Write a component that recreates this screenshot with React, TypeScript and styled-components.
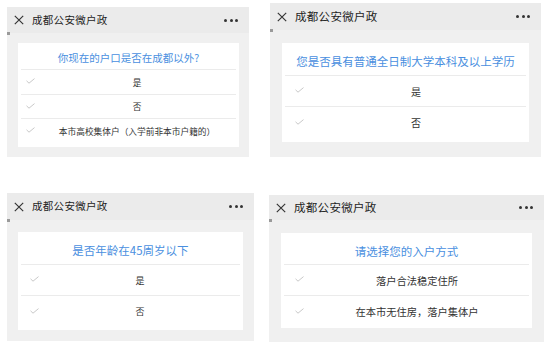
import styled, { createGlobalStyle } from 'styled-components'

const GlobalStyle = createGlobalStyle`
  html, body {
    margin: 0;
    padding: 0;
    background: #ffffff;
  }
  body {
    font-family: "Noto Sans CJK SC", "Noto Sans", sans-serif;
  }
`

const Page = styled.div`
  display: grid;
  grid-template-columns: 262px 282px;
  grid-template-rows: 154px 152px;
  row-gap: 36px;
  padding: 3px 0 0 7px;
  width: 551px;
  height: 345px;
  box-sizing: border-box;
  overflow: hidden;
`

const PanelFrame = styled.div<{ $w: number; $h: number; $mt: number; $ml: number }>`
  position: relative;
  display: flex;
  flex-direction: column;
  width: ${p => p.$w}px;
  height: ${p => p.$h}px;
  margin-top: ${p => p.$mt}px;
  margin-left: ${p => p.$ml}px;
  background-color: #f0f0f0;
`

const Header = styled.div<{ $h: number; $fs: number }>`
  display: flex;
  align-items: center;
  height: ${p => p.$h}px;
  padding: 0 11px 0 7px;
  background-color: #ebebeb;
  color: #1e1e1e;
  font-size: ${p => p.$fs}px;
  flex-shrink: 0;
`

const HeaderTitle = styled.div`
  flex: 1;
  margin-left: 8px;
  line-height: 1;
  letter-spacing: 0.3px;
`

const Dots = styled.div`
  display: flex;
  gap: 2.5px;
`

const Dot = styled.span`
  width: 3px;
  height: 3px;
  border-radius: 50%;
  background-color: #333;
`

const Marker = styled.span`
  position: absolute;
  left: 0;
  width: 3px;
  height: 3px;
  background-color: #9a9a9a;
`

const Card = styled.div<{ $mt: number; $ml: number; $mr: number; $pb: number }>`
  margin: ${p => p.$mt}px ${p => p.$mr}px 0 ${p => p.$ml}px;
  padding: 0 3px ${p => p.$pb}px;
  background-color: #ffffff;
`

const Question = styled.div<{ $h: number; $fs: number; $pt: number }>`
  display: flex;
  align-items: center;
  justify-content: center;
  height: ${p => p.$h}px;
  padding-top: ${p => p.$pt}px;
  box-sizing: border-box;
  color: #4a8fe0;
  font-size: ${p => p.$fs}px;
  border-bottom: 1px solid #ebebeb;
`

const Option = styled.div<{ $h: number; $fs: number; $last: boolean }>`
  display: flex;
  align-items: center;
  height: ${p => p.$h}px;
  box-sizing: border-box;
  border-bottom: ${p => (p.$last ? 'none' : '1px solid #ebebeb')};
  color: #333;
  font-size: ${p => p.$fs}px;
`

const CheckCol = styled.div<{ $w: number; $pl: number }>`
  width: ${p => p.$w}px;
  padding-left: ${p => p.$pl}px;
  box-sizing: border-box;
  display: flex;
  align-items: center;
  margin-top: -2px;
`

const OptionText = styled.div`
  flex: 1;
  text-align: center;
  white-space: nowrap;
`

function CloseIcon({ size }: { size: number }) {
  return (
    <svg width={size} height={size} viewBox="0 0 10 10">
      <path d="M0.8 0.8L9.2 9.2M9.2 0.8L0.8 9.2" stroke="#333" strokeWidth="1.15" />
    </svg>
  )
}

function CheckIcon() {
  return (
    <svg width="9" height="6" viewBox="0 0 9 6">
      <polyline points="0.5,2.8 3,5.2 8.5,0.6" fill="none" stroke="#c2c2c2" strokeWidth="0.9" />
    </svg>
  )
}

interface IPanel {
  w: number
  h: number
  mt: number
  ml: number
  headerH: number
  headerFs: number
  closeSize: number
  card: { mt: number; ml: number; mr: number; pb: number }
  titleH: number
  titlePt: number
  titleFs: number
  question: string
  rows: number[]
  optionFs: number
  checkW: number
  checkPl: number
  options: string[]
}

const panels: IPanel[] = [
  {
    w: 242, h: 150, mt: 4, ml: 0,
    headerH: 26, headerFs: 10.5, closeSize: 10,
    card: { mt: 10, ml: 11, mr: 10, pb: 4 },
    titleH: 27, titlePt: 2, titleFs: 10.5,
    question: '你现在的户口是否在成都以外?',
    rows: [25, 24, 24],
    optionFs: 8.7, checkW: 17, checkPl: 5,
    options: ['是', '否', '本市高校集体户（入学前非本市户籍的）'],
  },
  {
    w: 271, h: 154, mt: 0, ml: 1,
    headerH: 27, headerFs: 11.5, closeSize: 10,
    card: { mt: 13, ml: 12, mr: 12, pb: 4 },
    titleH: 33, titlePt: 4, titleFs: 11.5,
    question: '您是否具有普通全日制大学本科及以上学历',
    rows: [31, 31],
    optionFs: 10, checkW: 21, checkPl: 10,
    options: ['是', '否'],
  },
  {
    w: 247, h: 148, mt: 0, ml: 0,
    headerH: 27, headerFs: 10.5, closeSize: 10,
    card: { mt: 12, ml: 11, mr: 11, pb: 3 },
    titleH: 33, titlePt: 4, titleFs: 11.5,
    question: '是否年龄在45周岁以下',
    rows: [31, 31],
    optionFs: 9, checkW: 19, checkPl: 9,
    options: ['是', '否'],
  },
  {
    w: 275, h: 147, mt: 2, ml: 0,
    headerH: 25, headerFs: 11.5, closeSize: 10,
    card: { mt: 13, ml: 12, mr: 12, pb: 1 },
    titleH: 32, titlePt: 4, titleFs: 11.5,
    question: '请选择您的入户方式',
    rows: [31, 31],
    optionFs: 10.25, checkW: 21, checkPl: 11,
    options: ['落户合法稳定住所', '在本市无住房，落户集体户'],
  },
]

function Panel(p: IPanel) {
  return (
    <PanelFrame $w={p.w} $h={p.h} $mt={p.mt} $ml={p.ml}>
      <Header $h={p.headerH} $fs={p.headerFs}>
        <CloseIcon size={p.closeSize} />
        <HeaderTitle>成都公安微户政</HeaderTitle>
        <Dots>
          <Dot />
          <Dot />
          <Dot />
        </Dots>
      </Header>
      <Marker style={{ top: p.headerH - 1 }} />
      <Card $mt={p.card.mt} $ml={p.card.ml} $mr={p.card.mr} $pb={p.card.pb}>
        <Question $h={p.titleH} $fs={p.titleFs} $pt={p.titlePt}>
          {p.question}
        </Question>
        {p.options.map((option, i) => (
          <Option key={option} $h={p.rows[i]} $fs={p.optionFs} $last={i === p.options.length - 1}>
            <CheckCol $w={p.checkW} $pl={p.checkPl}>
              <CheckIcon />
            </CheckCol>
            <OptionText>{option}</OptionText>
          </Option>
        ))}
      </Card>
    </PanelFrame>
  )
}

export default function App() {
  return (
    <>
      <GlobalStyle />
      <Page>
        {panels.map((p, i) => (
          <Panel key={i} {...p} />
        ))}
      </Page>
    </>
  )
}
